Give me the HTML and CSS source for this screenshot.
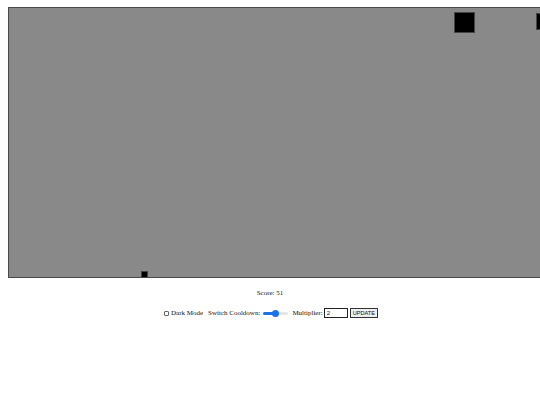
FILE: index.html
```html
<!DOCTYPE html>
<html>
<head>
<meta charset="utf-8">
<link rel="stylesheet" href="styles.css">
</head>
<body>
<div class="game">
  <div class="block block-a"></div>
  <div class="block block-b"></div>
  <div class="block block-c"></div>
</div>
<p class="score">Score: 51</p>
<div class="controls">
  <label class="check"><span class="box"></span>Dark Mode</label>
  <span class="label">Switch Cooldown:</span>
  <span class="slider"><span class="fill"></span><span class="thumb"></span></span>
  <span class="label">Multiplier:</span>
  <span class="input">2</span>
  <span class="button">UPDATE</span>
</div>
</body>
</html>
```
FILE: styles.css
```css
html, body {
  margin: 0;
  padding: 0;
  overflow: hidden;
  background: #fff;
  font-family: "Liberation Serif", "Times New Roman", serif;
  font-size: 7px;
  color: #111;
}
.game {
  position: relative;
  margin: 7px 0 0 8px;
  width: 560px;
  height: 271px;
  background: #898989;
  border: 1px solid #4a4a4a;
  box-sizing: border-box;
}
.block {
  position: absolute;
  background: #000;
  border: 1px solid #444;
  box-sizing: border-box;
}
.block-a { left: 445px; top: 4px; width: 21px; height: 21px; }
.block-b { left: 527px; top: 5px; width: 18px; height: 17px; }
.block-c { left: 132px; top: 263px; width: 7px; height: 7px; }
.score {
  margin: 10px 0 0 0;
  text-align: center;
  line-height: 10px;
}
.controls {
  display: flex;
  justify-content: center;
  align-items: center;
  margin-top: 9px;
  height: 12px;
  padding-left: 2px;
}
.check { display: flex; align-items: center; margin-right: 5px; }
.box {
  width: 3px; height: 3px;
  border: 1px solid #666;
  border-radius: 1px;
  margin-right: 2px;
}
.label { margin-right: 3px; }
.label + .input { margin-left: -2px; }
.slider {
  position: relative;
  width: 25px;
  height: 3px;
  background: #e6e6e6;
  border-radius: 2px;
  margin-right: 4px;
}
.fill {
  position: absolute;
  left: 0; top: 0;
  width: 12px; height: 3px;
  background: #1a73e8;
  border-radius: 2px;
}
.thumb {
  position: absolute;
  left: 9px; top: -2px;
  width: 7px; height: 7px;
  border-radius: 50%;
  background: #1a73e8;
}
.input {
  width: 20px;
  height: 8px;
  border: 1px solid #222;
  padding-left: 2px;
  line-height: 8px;
  font-family: "Liberation Sans", Arial, sans-serif;
  font-size: 6px;
  margin-right: 2px;
}
.button {
  height: 8px;
  line-height: 8px;
  padding: 0 2px;
  border: 1px solid #333;
  background: #efefef;
  font-family: "Liberation Sans", Arial, sans-serif;
  font-size: 5.6px;
}
```
